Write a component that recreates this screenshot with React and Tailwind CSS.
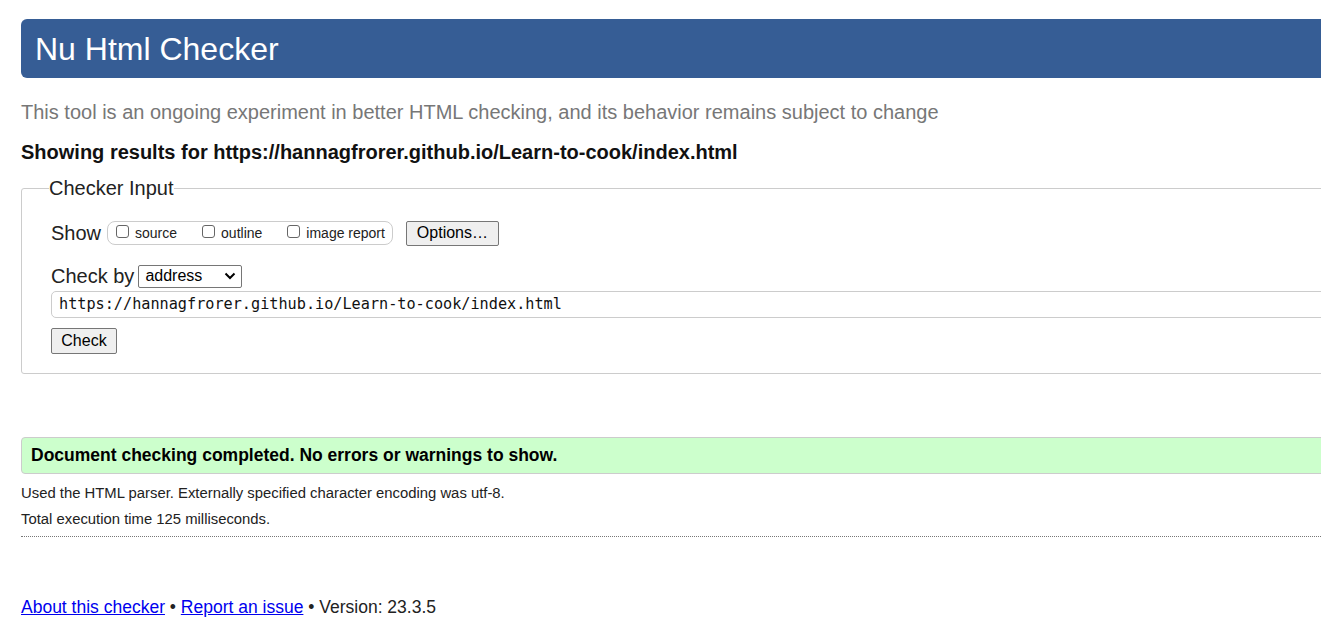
import React from 'react';

function Box({ label }) {
  return (
    <label className="flex items-center">
      <span className="inline-block w-[13px] h-[13px] border border-[#666] rounded-[3px] bg-white mr-[6px] -mt-[4px]" />
      <span className="text-[14px] leading-[18px] text-[#222]">{label}</span>
    </label>
  );
}

export default function App() {
  return (
    <div className="w-[1321px] h-[637px] overflow-hidden bg-white text-[#222] font-['Liberation_Sans',Arial,sans-serif]">
      <div className="ml-[21px] w-[1360px] pt-[19px]">
        {/* header bar */}
        <div className="h-[59px] bg-[#365d95] rounded-l-[6px] flex items-center pl-[14px]">
          <h1 className="text-[32px] text-white leading-none">Nu Html Checker</h1>
        </div>

        <p className="mt-[22px] text-[20px] leading-[24px] text-[#777]">
          This tool is an ongoing experiment in better HTML checking, and its behavior remains subject to change
        </p>
        <p className="mt-[16px] text-[20px] leading-[24px] font-bold text-[#111]">
          Showing results for https://hannagfrorer.github.io/Learn-to-cook/index.html
        </p>

        {/* checker input */}
        <fieldset className="mt-[12px] border border-[#ccc] rounded-[3px] px-[29px] pb-[19px]">
          <legend className="text-[20px] text-[#222] -ml-[2px] leading-[24px]">Checker Input</legend>
          <div className="flex items-center h-[24px] mt-[21px]">
            <span className="text-[20px] leading-[24px] mr-[6px]">Show</span>
            <div className="flex items-center gap-[25px] h-[24px] border border-[#ccc] rounded-[8px] pl-[8px] pr-[7px]">
              <Box label="source" />
              <Box label="outline" />
              <Box label="image report" />
            </div>
            <button className="ml-[13px] h-[25px] w-[93px] bg-[#efefef] border border-[#767676] rounded-[2px] text-[16px] text-black leading-none">
              Options…
            </button>
          </div>
          <div className="flex items-center h-[24px] mt-[19px]">
            <span className="text-[20px] leading-[24px] mr-[4px]">Check by</span>
            <div className="w-[104px] h-[23px] border border-[#767676] rounded-[2px] flex items-center justify-between pl-[6px] pr-[5px] bg-white">
              <span className="text-[16px] text-black leading-none">address</span>
              <svg width="12" height="8" viewBox="0 0 12 8" fill="none">
                <path d="M1.5 1.5 L6 6 L10.5 1.5" stroke="#000" strokeWidth="2" />
              </svg>
            </div>
          </div>
          <div className="mt-[3px] h-[27px] border border-[#ccc] rounded-[5px] flex items-center pl-[7px] bg-white">
            <span className="font-['DejaVu_Sans_Mono',monospace] text-[15.2px] text-[#111]">
              https://hannagfrorer.github.io/Learn-to-cook/index.html
            </span>
          </div>
          <button className="block mt-[10px] h-[26px] w-[66px] bg-[#efefef] border border-[#767676] rounded-[2px] text-[16px] text-black leading-none">
            Check
          </button>
        </fieldset>

        {/* result */}
        <div className="mt-[63px] h-[37px] bg-[#ccffcc] border border-[#ccc] rounded-l-[4px] flex items-center pl-[9px]">
          <span className="font-bold text-[17.5px] text-black">Document checking completed. No errors or warnings to show.</span>
        </div>
        <p className="mt-[10px] text-[14.85px] leading-[18px] text-[#222]">
          Used the HTML parser. Externally specified character encoding was utf-8.
        </p>
        <p className="mt-[8px] text-[14.85px] leading-[18px] text-[#222]">Total execution time 125 milliseconds.</p>
        <div className="mt-[8px] border-b border-dotted border-[#777]" />

        <p className="mt-[59px] text-[17.5px] leading-[22px] text-[#222]">
          <a href="#" className="text-[#0000ee] underline">About this checker</a>
          {' • '}
          <a href="#" className="text-[#0000ee] underline">Report an issue</a>
          {' • Version: 23.3.5'}
        </p>
      </div>
    </div>
  );
}
